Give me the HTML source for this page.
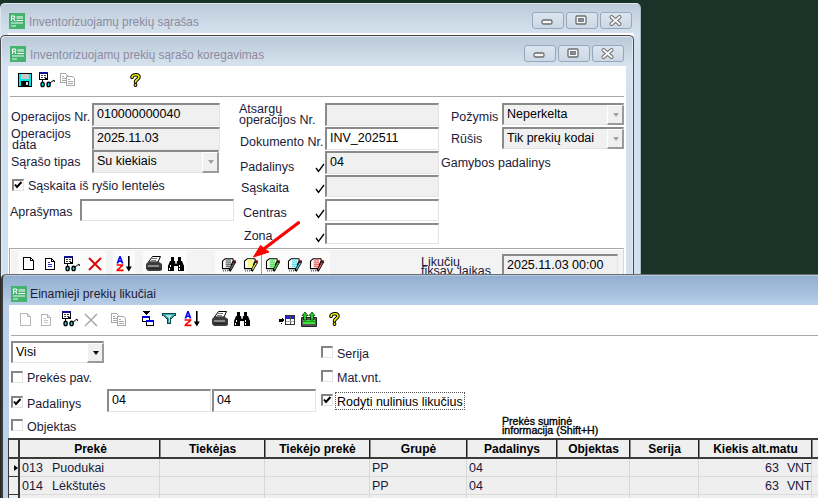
<!DOCTYPE html><html><head><meta charset="utf-8"><style>
*{box-sizing:border-box;margin:0;padding:0}
html,body{width:818px;height:498px;overflow:hidden;background:#1a3329;font-family:"Liberation Sans",sans-serif;font-size:12px;color:#000}
.a{position:absolute}
svg.a{overflow:visible}
.win{position:absolute;border-radius:6px 6px 0 0}
.ttl{position:absolute;font-size:11.8px;color:#8d8aa0;white-space:nowrap;line-height:14px;transform:scaleY(1.12);transform-origin:0 11px}
.cb{position:absolute;width:32px;height:17px;border:1px solid #98a8bc;border-radius:3px;background:linear-gradient(#dbe5ef,#cbd8e5)}
.lbl{position:absolute;white-space:nowrap;color:#1a1a3a;font-size:12.5px;line-height:14px}
.lbl2{position:absolute;white-space:nowrap;color:#1a1a3a;font-size:12.5px;line-height:9px}
.fld{position:absolute;border-top:2px solid #8a8a8a;border-left:2px solid #8a8a8a;border-right:1px solid #e4e4e4;border-bottom:1px solid #e4e4e4;background:#f0f0f0;font-size:12.5px;line-height:19px;padding-left:3px;white-space:nowrap;color:#000}
.fld.w{background:#fff}
.dd{position:absolute;top:0px;right:-1px;width:17px;bottom:-1px;background:#f0f0f0;border-left:1px solid #fff;border-top:1px solid #fff;border-right:2px solid #9a9a9a;border-bottom:2px solid #9a9a9a}
.dd:after{content:"";position:absolute;left:4.5px;top:7px;border-left:3.5px solid transparent;border-right:3.5px solid transparent;border-top:4.5px solid #a0a0a0}
.dd.k:after{border-top-color:#000}
.chk{position:absolute;width:12px;height:12px;border-top:2px solid #848484;border-left:2px solid #848484;border-right:1px solid #e2e2e2;border-bottom:1px solid #e2e2e2;background:#fff}
.sep{position:absolute;height:2px;background:#a8a8a8;border-bottom:1px solid #fff}
.hd{font-weight:bold;text-align:center;font-size:12px;line-height:14px;color:#000;white-space:nowrap}
.cell{font-size:12.5px;line-height:15px;color:#1a1a3a;white-space:nowrap}
.tk{position:absolute;width:9px;height:9px}
</style></head><body>
<div class="win" style="left:0;top:3px;width:641px;height:280px;background:linear-gradient(#bccbd9,#c9d7e4 14px,#d5e2ee 30px,#d3e1ef 60px);border:1px solid #dfe6ed;border-right-color:#a9b7c5;border-bottom:none;border-radius:5px 5px 0 0"></div>
<svg class="a" style="left:9px;top:13px" width="16" height="16" viewBox="0 0 16 16"><rect x="0" y="0" width="16" height="16" fill="#45b26f"/><path fill-rule="evenodd" d="M2 2.5 H4.6 C5.7 2.5 6.3 3.1 6.3 4.1 C6.3 4.9 5.9 5.4 5.2 5.6 L6.6 8 H5.4 L4.2 5.8 H3.1 V8 H2 Z M3.1 3.4 V4.9 H4.5 C5 4.9 5.2 4.6 5.2 4.15 C5.2 3.7 5 3.4 4.5 3.4 Z" fill="#fff"/><rect x="7.5" y="3" width="6.5" height="1" fill="#a8dcbc"/><rect x="7.5" y="4.5" width="6.5" height="1" fill="#fff"/><rect x="7.5" y="7" width="6.5" height="1" fill="#fff"/><rect x="2" y="9.5" width="12" height="1" fill="#f0faf4"/><rect x="2" y="12.5" width="5" height="1" fill="#e8f6ee"/></svg>
<div class="ttl" style="left:29px;top:15px">Inventorizuojamų prekių sąrašas</div>
<div class="cb" style="left:532px;top:12px"></div><div class="cb" style="left:566px;top:12px"></div><div class="cb" style="left:600px;top:12px"></div><svg class="a" style="left:541px;top:19px" width="13" height="7" viewBox="0 0 13 7"><rect x="1" y="1" width="10" height="4" rx="1.5" fill="#f6f6f6" stroke="#6e6e6e" stroke-width="1.3"/></svg><svg class="a" style="left:575px;top:15px" width="13" height="11" viewBox="0 0 13 11"><rect x="1" y="1" width="10" height="8" rx="1" fill="#f6f6f6" stroke="#6e6e6e" stroke-width="1.3"/><rect x="3.5" y="3.5" width="5" height="3" fill="#7a8ca2" stroke="#6e6e6e" stroke-width="0.8"/></svg><svg class="a" style="left:609px;top:15px" width="13" height="11" viewBox="0 0 13 11"><path d="M2.5 2 L10.5 9 M10.5 2 L2.5 9" stroke="#6e6e6e" stroke-width="4" stroke-linecap="round"/><path d="M2.5 2 L10.5 9 M10.5 2 L2.5 9" stroke="#f6f6f6" stroke-width="2" stroke-linecap="round"/></svg>
<div class="a" style="left:8px;top:33px;width:626px;height:3px;background:#fff"></div>
<div class="win" style="left:0;top:35px;width:634px;height:250px;background:linear-gradient(#bac9d7,#c8d6e3 15px,#d6e3ef 30px,#d2e1f0 60px);border:1px solid #4a4a4a;border-bottom:none;border-radius:5px 5px 0 0;box-shadow:inset 1px 1px 0 #e0e8f0,inset -1px 0 0 #e0e8f0"></div>
<svg class="a" style="left:10px;top:46px" width="16" height="16" viewBox="0 0 16 16"><rect x="0" y="0" width="16" height="16" fill="#45b26f"/><path fill-rule="evenodd" d="M2 2.5 H4.6 C5.7 2.5 6.3 3.1 6.3 4.1 C6.3 4.9 5.9 5.4 5.2 5.6 L6.6 8 H5.4 L4.2 5.8 H3.1 V8 H2 Z M3.1 3.4 V4.9 H4.5 C5 4.9 5.2 4.6 5.2 4.15 C5.2 3.7 5 3.4 4.5 3.4 Z" fill="#fff"/><rect x="7.5" y="3" width="6.5" height="1" fill="#a8dcbc"/><rect x="7.5" y="4.5" width="6.5" height="1" fill="#fff"/><rect x="7.5" y="7" width="6.5" height="1" fill="#fff"/><rect x="2" y="9.5" width="12" height="1" fill="#f0faf4"/><rect x="2" y="12.5" width="5" height="1" fill="#e8f6ee"/></svg>
<div class="ttl" style="left:30px;top:48px">Inventorizuojamų prekių sąrašo koregavimas</div>
<div class="cb" style="left:524px;top:45px"></div><div class="cb" style="left:558px;top:45px"></div><div class="cb" style="left:592px;top:45px"></div><svg class="a" style="left:533px;top:52px" width="13" height="7" viewBox="0 0 13 7"><rect x="1" y="1" width="10" height="4" rx="1.5" fill="#f6f6f6" stroke="#6e6e6e" stroke-width="1.3"/></svg><svg class="a" style="left:567px;top:48px" width="13" height="11" viewBox="0 0 13 11"><rect x="1" y="1" width="10" height="8" rx="1" fill="#f6f6f6" stroke="#6e6e6e" stroke-width="1.3"/><rect x="3.5" y="3.5" width="5" height="3" fill="#7a8ca2" stroke="#6e6e6e" stroke-width="0.8"/></svg><svg class="a" style="left:601px;top:48px" width="13" height="11" viewBox="0 0 13 11"><path d="M2.5 2 L10.5 9 M10.5 2 L2.5 9" stroke="#6e6e6e" stroke-width="4" stroke-linecap="round"/><path d="M2.5 2 L10.5 9 M10.5 2 L2.5 9" stroke="#f6f6f6" stroke-width="2" stroke-linecap="round"/></svg>
<div class="a" style="left:8px;top:66px;width:618px;height:210px;background:#fff"></div>
<div class="sep" style="left:10px;top:96px;width:614px"></div>
<svg class="a" style="left:18px;top:73px" width="14" height="14" viewBox="0 0 14 14" shape-rendering="crispEdges"><rect x="0" y="0" width="14" height="14" fill="#000"/><rect x="1" y="1" width="12" height="12" fill="#00e8e8"/><rect x="3" y="1" width="8" height="5" fill="#c8c8c8"/><rect x="3" y="8" width="8" height="6" fill="#000"/><rect x="8" y="9" width="2" height="3" fill="#e0e0e0"/></svg>
<svg class="a" style="left:39px;top:72px" width="9" height="8" viewBox="0 0 9 8" shape-rendering="crispEdges"><rect x="0" y="0" width="9" height="8" fill="#000"/><rect x="0" y="0" width="9" height="2" fill="#101090"/><rect x="1" y="2" width="7" height="5" fill="#fff"/><rect x="2" y="3" width="2" height="1" fill="#444"/><rect x="5" y="3" width="2" height="1" fill="#444"/><rect x="2" y="5" width="2" height="1" fill="#444"/><rect x="5" y="5" width="2" height="1" fill="#444"/><rect x="6" y="6" width="2" height="2" fill="#000"/><rect x="3" y="8" width="1" height="2" fill="#000"/></svg><svg class="a" style="left:39px;top:72px" width="17" height="16" viewBox="0 0 17 16"><ellipse cx="3.6" cy="12.4" rx="1.6" ry="2.2" fill="#00e8f8" stroke="#000" stroke-width="1.4"/><ellipse cx="9.6" cy="12.4" rx="1.6" ry="2.2" fill="#00e8f8" stroke="#000" stroke-width="1.4"/><path d="M11 11 L15 8 L15.5 10" fill="none" stroke="#000" stroke-width="1"/></svg>
<svg class="a" style="left:60px;top:73px" width="15" height="13" viewBox="0 0 15 13" shape-rendering="crispEdges"><path d="M0.5 0.5 H5.5 L7.5 2.5 V9.5 H0.5 Z" fill="#fff" stroke="#a8a8a8"/><rect x="2" y="3" width="2" height="1" fill="#a8a8a8"/><rect x="2" y="5" width="4" height="1" fill="#a8a8a8"/><rect x="2" y="7" width="4" height="1" fill="#a8a8a8"/><path d="M6.5 3.5 H12.5 L14.5 5.5 V12.5 H6.5 Z" fill="#fff" stroke="#a8a8a8"/><rect x="8" y="6" width="2" height="1" fill="#a8a8a8"/><rect x="8" y="8" width="5" height="1" fill="#a8a8a8"/><rect x="8" y="10" width="5" height="1" fill="#a8a8a8"/></svg>
<svg class="a" style="left:130px;top:73px" width="11" height="14" viewBox="0 0 11 14"><path d="M2 4.5 C2 1.5 9 0.5 9 4 C9 6.5 5.5 6.5 5.5 9" fill="none" stroke="#000" stroke-width="3.6" stroke-linecap="round"/><circle cx="5.5" cy="12" r="1.9" fill="#000"/><path d="M2 4.5 C2 1.5 9 0.5 9 4 C9 6.5 5.5 6.5 5.5 9" fill="none" stroke="#f0f000" stroke-width="1.6" stroke-linecap="round"/><circle cx="5.5" cy="12" r="0.9" fill="#f0f000"/></svg>
<div class="lbl" style="left:11px;top:110px">Operacijos Nr.</div>
<div class="lbl2" style="left:11px;top:130px">Operacijos</div>
<div class="lbl2" style="left:12px;top:141px">data</div>
<div class="lbl" style="left:11px;top:155px">Sąrašo tipas</div>
<div class="fld" style="left:92px;top:103px;width:128px;height:23px">010000000040</div>
<div class="fld" style="left:92px;top:127px;width:128px;height:23px">2025.11.03</div>
<div class="fld" style="left:92px;top:150px;width:127px;height:23px">Su kiekiais<div class="dd"></div></div>
<div class="chk" style="left:12px;top:179px"></div><svg class="a" style="left:12px;top:179px" width="12" height="12" viewBox="0 0 12 12"><path d="M3 5.5 L5 8 L9.5 3" fill="none" stroke="#000" stroke-width="2"/></svg>
<div class="lbl" style="left:28px;top:179px">Sąskaita iš ryšio lentelės</div>
<div class="lbl" style="left:10px;top:205px">Aprašymas</div>
<div class="fld w" style="left:80px;top:199px;width:154px;height:22px"></div>
<div class="lbl2" style="left:239px;top:105px">Atsargų</div>
<div class="lbl2" style="left:239px;top:116px">operacijos Nr.</div>
<div class="lbl" style="left:240px;top:135px">Dokumento Nr.</div>
<div class="lbl" style="left:240px;top:160px">Padalinys</div>
<div class="lbl" style="left:241px;top:181px">Sąskaita</div>
<div class="lbl" style="left:243px;top:206px">Centras</div>
<div class="lbl" style="left:244px;top:229px">Zona</div>
<div class="fld" style="left:325px;top:103px;width:114px;height:23px"></div>
<div class="fld w" style="left:325px;top:127px;width:114px;height:23px">INV_202511</div>
<div class="fld" style="left:325px;top:151px;width:114px;height:23px">04</div>
<div class="fld" style="left:325px;top:175px;width:114px;height:22px"></div>
<div class="fld w" style="left:325px;top:199px;width:114px;height:22px"></div>
<div class="fld w" style="left:325px;top:223px;width:114px;height:21px"></div>
<svg class="a" style="left:315px;top:163px" width="10" height="10" viewBox="0 0 10 10"><path d="M1 5 L3.5 8.5 L9 1" fill="none" stroke="#000" stroke-width="1.3"/></svg>
<svg class="a" style="left:315px;top:184px" width="10" height="10" viewBox="0 0 10 10"><path d="M1 5 L3.5 8.5 L9 1" fill="none" stroke="#000" stroke-width="1.3"/></svg>
<svg class="a" style="left:315px;top:209px" width="10" height="10" viewBox="0 0 10 10"><path d="M1 5 L3.5 8.5 L9 1" fill="none" stroke="#000" stroke-width="1.3"/></svg>
<svg class="a" style="left:315px;top:233px" width="10" height="10" viewBox="0 0 10 10"><path d="M1 5 L3.5 8.5 L9 1" fill="none" stroke="#000" stroke-width="1.3"/></svg>
<div class="lbl" style="left:451px;top:110px">Požymis</div>
<div class="lbl" style="left:451px;top:132px">Rūšis</div>
<div class="fld" style="left:502px;top:103px;width:122px;height:22px">Neperkelta<div class="dd"></div></div>
<div class="fld" style="left:502px;top:127px;width:122px;height:22px">Tik prekių kodai<div class="dd"></div></div>
<div class="lbl" style="left:441px;top:156px">Gamybos padalinys</div>
<div class="a" style="left:9px;top:248px;width:615px;height:30px;background:#f3f3f3;border-top:1px solid #a8a8a8;border-left:1px solid #a8a8a8;border-right:1px solid #d8d8d8;box-shadow:inset 1px 1px 0 #fff"></div>
<div class="a" style="left:18px;top:251px;width:88px;height:24px;background:#fbfbfb"></div>
<div class="a" style="left:113px;top:251px;width:22px;height:24px;background:#fbfbfb"></div>
<div class="a" style="left:143px;top:251px;width:44px;height:24px;background:#fbfbfb"></div>
<div class="a" style="left:215px;top:251px;width:115px;height:24px;background:#fbfbfb"></div>
<div class="a" style="left:261px;top:251px;width:1px;height:24px;background:#a0a0a0"></div>
<svg class="a" style="left:23px;top:257px" width="11" height="13" viewBox="0 0 11 13" shape-rendering="crispEdges"><path d="M0.5 0.5 H7.5 L10.5 3.5 V12.5 H0.5 Z" fill="#fff" stroke="#000"/><path d="M7.5 0.5 V3.5 H10.5" fill="none" stroke="#000"/></svg>
<svg class="a" style="left:45px;top:258px" width="10" height="12" viewBox="0 0 10 12" shape-rendering="crispEdges"><path d="M0.5 0.5 H6.5 L9.5 3.5 V11.5 H0.5 Z" fill="#fff" stroke="#000"/><path d="M6.5 0.5 V3.5 H9.5" fill="none" stroke="#000"/><rect x="3" y="4" width="2" height="1" fill="#3030c0"/><rect x="3" y="6" width="4" height="1" fill="#3030c0"/><rect x="3" y="8" width="4" height="1" fill="#3030c0"/></svg>
<svg class="a" style="left:64px;top:256px" width="9" height="8" viewBox="0 0 9 8" shape-rendering="crispEdges"><rect x="0" y="0" width="9" height="8" fill="#000"/><rect x="0" y="0" width="9" height="2" fill="#101090"/><rect x="1" y="2" width="7" height="5" fill="#fff"/><rect x="2" y="3" width="2" height="1" fill="#444"/><rect x="5" y="3" width="2" height="1" fill="#444"/><rect x="2" y="5" width="2" height="1" fill="#444"/><rect x="5" y="5" width="2" height="1" fill="#444"/><rect x="6" y="6" width="2" height="2" fill="#000"/><rect x="3" y="8" width="1" height="2" fill="#000"/></svg><svg class="a" style="left:64px;top:256px" width="17" height="16" viewBox="0 0 17 16"><ellipse cx="3.6" cy="12.4" rx="1.6" ry="2.2" fill="#00e8f8" stroke="#000" stroke-width="1.4"/><ellipse cx="9.6" cy="12.4" rx="1.6" ry="2.2" fill="#00e8f8" stroke="#000" stroke-width="1.4"/><path d="M11 11 L15 8 L15.5 10" fill="none" stroke="#000" stroke-width="1"/></svg>
<svg class="a" style="left:88px;top:257px" width="14" height="14" viewBox="0 0 14 14"><path d="M1 1 L13 13 M13 1 L1 13" stroke="#e00000" stroke-width="1.8" fill="none"/></svg>
<svg class="a" style="left:116px;top:256px" width="16" height="16" viewBox="0 0 16 16"><path fill-rule="evenodd" d="M0.5 7.5 L3.3 0 H4.7 L7.5 7.5 H5.6 L5.1 6 H2.9 L2.4 7.5 Z M3.3 4.6 H4.7 L4 2.4 Z" fill="#0000ff"/><path d="M0.5 8.2 H7.3 V9.7 L3 13.6 H7.5 V15.2 H0.5 V13.7 L4.8 9.8 H0.5 Z" fill="#ff0000"/><rect x="12" y="0" width="1.6" height="11" fill="#000"/><path d="M9.8 10.5 H15.8 L12.8 15.6 Z" fill="#000"/></svg>
<svg class="a" style="left:146px;top:256px" width="16" height="15" viewBox="0 0 16 15"><path d="M6.5 0.5 L14.5 0.5 L12 6 L2.5 6 Z" fill="#fff" stroke="#000"/><rect x="6" y="2" width="5" height="1" fill="#777"/><rect x="5" y="4" width="5" height="1" fill="#777"/><path d="M2 6 H13 L16 8 V14 L14 15 H2 L0 13 V8 Z" fill="#3c3c3c"/><rect x="2" y="9" width="11" height="2" fill="#8a8a8a"/><rect x="2" y="12" width="12" height="1" fill="#202020"/></svg>
<svg class="a" style="left:168px;top:257px" width="16" height="14" viewBox="0 0 16 14"><rect x="3" y="0" width="3" height="4" fill="#000"/><rect x="10" y="0" width="3" height="4" fill="#000"/><path d="M2 4 H7 L7.5 7 H8.5 L9 4 H14 L16 9 V14 H10 V9 H6 V14 H0 V9 Z" fill="#000"/><rect x="2" y="8" width="1" height="2" fill="#fff"/><rect x="11" y="8" width="1" height="2" fill="#fff"/><rect x="1" y="11" width="1" height="2" fill="#fff"/><rect x="11" y="11" width="1" height="2" fill="#fff"/></svg>
<svg class="a" style="left:222px;top:258px" width="15" height="14" viewBox="0 0 15 14"><path d="M3.3 0.7 H10.9 L11.3 2.6 L7.6 10.6 H0.5 V3.2 Z" fill="#fff" stroke="#000" stroke-width="1.1" stroke-linejoin="round"/><rect x="3.7" y="1.4" width="5.3" height="1.4" fill="#707070"/><rect x="3.7" y="2.8" width="5.3" height="0.7" fill="#c0c0c0"/><rect x="3.7" y="3.5" width="5.3" height="1.4" fill="#707070"/><rect x="3.7" y="4.9" width="5.3" height="0.7" fill="#c0c0c0"/><rect x="3.7" y="5.6" width="5.3" height="1.4" fill="#707070"/><rect x="3.7" y="7.0" width="5.3" height="0.7" fill="#c0c0c0"/><rect x="3.7" y="7.700000000000001" width="5.3" height="1.4" fill="#707070"/><rect x="3.7" y="9.100000000000001" width="5.3" height="0.7" fill="#c0c0c0"/><rect x="1" y="12" width="1" height="1.6" fill="#777"/><rect x="3" y="12" width="1" height="1.6" fill="#777"/><rect x="5" y="12" width="1" height="1.6" fill="#777"/><path d="M12.9 3.6 L7.5 13.2" stroke="#000" stroke-width="2.6"/><path d="M12.5 4.3 L8.4 11.5" stroke="#707070" stroke-width="1.1"/><rect x="11.3" y="2.3" width="2.5" height="2.4" fill="#6a0000"/></svg>
<svg class="a" style="left:244px;top:258px" width="15" height="14" viewBox="0 0 15 14"><path d="M3.3 0.7 H10.9 L11.3 2.6 L7.6 10.6 H0.5 V3.2 Z" fill="#fff" stroke="#000" stroke-width="1.1" stroke-linejoin="round"/><rect x="3.7" y="1.4" width="5.3" height="1.4" fill="#f8f860"/><rect x="3.7" y="2.8" width="5.3" height="0.7" fill="#ffffc0"/><rect x="3.7" y="3.5" width="5.3" height="1.4" fill="#f8f860"/><rect x="3.7" y="4.9" width="5.3" height="0.7" fill="#ffffc0"/><rect x="3.7" y="5.6" width="5.3" height="1.4" fill="#f8f860"/><rect x="3.7" y="7.0" width="5.3" height="0.7" fill="#ffffc0"/><rect x="3.7" y="7.700000000000001" width="5.3" height="1.4" fill="#f8f860"/><rect x="3.7" y="9.100000000000001" width="5.3" height="0.7" fill="#ffffc0"/><rect x="1" y="12" width="1" height="1.6" fill="#777"/><rect x="3" y="12" width="1" height="1.6" fill="#777"/><rect x="5" y="12" width="1" height="1.6" fill="#777"/><path d="M12.9 3.6 L7.5 13.2" stroke="#000" stroke-width="2.6"/><path d="M12.5 4.3 L8.4 11.5" stroke="#f8f860" stroke-width="1.1"/><rect x="11.3" y="2.3" width="2.5" height="2.4" fill="#6a0000"/></svg>
<svg class="a" style="left:266px;top:258px" width="15" height="14" viewBox="0 0 15 14"><path d="M3.3 0.7 H10.9 L11.3 2.6 L7.6 10.6 H0.5 V3.2 Z" fill="#fff" stroke="#000" stroke-width="1.1" stroke-linejoin="round"/><rect x="3.7" y="1.4" width="5.3" height="1.4" fill="#50e050"/><rect x="3.7" y="2.8" width="5.3" height="0.7" fill="#b0f0b0"/><rect x="3.7" y="3.5" width="5.3" height="1.4" fill="#50e050"/><rect x="3.7" y="4.9" width="5.3" height="0.7" fill="#b0f0b0"/><rect x="3.7" y="5.6" width="5.3" height="1.4" fill="#50e050"/><rect x="3.7" y="7.0" width="5.3" height="0.7" fill="#b0f0b0"/><rect x="3.7" y="7.700000000000001" width="5.3" height="1.4" fill="#50e050"/><rect x="3.7" y="9.100000000000001" width="5.3" height="0.7" fill="#b0f0b0"/><rect x="1" y="12" width="1" height="1.6" fill="#777"/><rect x="3" y="12" width="1" height="1.6" fill="#777"/><rect x="5" y="12" width="1" height="1.6" fill="#777"/><path d="M12.9 3.6 L7.5 13.2" stroke="#000" stroke-width="2.6"/><path d="M12.5 4.3 L8.4 11.5" stroke="#50e050" stroke-width="1.1"/><rect x="11.3" y="2.3" width="2.5" height="2.4" fill="#6a0000"/></svg>
<svg class="a" style="left:288px;top:258px" width="15" height="14" viewBox="0 0 15 14"><path d="M3.3 0.7 H10.9 L11.3 2.6 L7.6 10.6 H0.5 V3.2 Z" fill="#fff" stroke="#000" stroke-width="1.1" stroke-linejoin="round"/><rect x="3.7" y="1.4" width="5.3" height="1.4" fill="#60e0f0"/><rect x="3.7" y="2.8" width="5.3" height="0.7" fill="#c0f4fa"/><rect x="3.7" y="3.5" width="5.3" height="1.4" fill="#60e0f0"/><rect x="3.7" y="4.9" width="5.3" height="0.7" fill="#c0f4fa"/><rect x="3.7" y="5.6" width="5.3" height="1.4" fill="#60e0f0"/><rect x="3.7" y="7.0" width="5.3" height="0.7" fill="#c0f4fa"/><rect x="3.7" y="7.700000000000001" width="5.3" height="1.4" fill="#60e0f0"/><rect x="3.7" y="9.100000000000001" width="5.3" height="0.7" fill="#c0f4fa"/><rect x="1" y="12" width="1" height="1.6" fill="#777"/><rect x="3" y="12" width="1" height="1.6" fill="#777"/><rect x="5" y="12" width="1" height="1.6" fill="#777"/><path d="M12.9 3.6 L7.5 13.2" stroke="#000" stroke-width="2.6"/><path d="M12.5 4.3 L8.4 11.5" stroke="#60e0f0" stroke-width="1.1"/><rect x="11.3" y="2.3" width="2.5" height="2.4" fill="#6a0000"/></svg>
<svg class="a" style="left:310px;top:258px" width="15" height="14" viewBox="0 0 15 14"><path d="M3.3 0.7 H10.9 L11.3 2.6 L7.6 10.6 H0.5 V3.2 Z" fill="#fff" stroke="#000" stroke-width="1.1" stroke-linejoin="round"/><rect x="3.7" y="1.4" width="5.3" height="1.4" fill="#f06a6a"/><rect x="3.7" y="2.8" width="5.3" height="0.7" fill="#fac0c0"/><rect x="3.7" y="3.5" width="5.3" height="1.4" fill="#f06a6a"/><rect x="3.7" y="4.9" width="5.3" height="0.7" fill="#fac0c0"/><rect x="3.7" y="5.6" width="5.3" height="1.4" fill="#f06a6a"/><rect x="3.7" y="7.0" width="5.3" height="0.7" fill="#fac0c0"/><rect x="3.7" y="7.700000000000001" width="5.3" height="1.4" fill="#f06a6a"/><rect x="3.7" y="9.100000000000001" width="5.3" height="0.7" fill="#fac0c0"/><rect x="1" y="12" width="1" height="1.6" fill="#777"/><rect x="3" y="12" width="1" height="1.6" fill="#777"/><rect x="5" y="12" width="1" height="1.6" fill="#777"/><path d="M12.9 3.6 L7.5 13.2" stroke="#000" stroke-width="2.6"/><path d="M12.5 4.3 L8.4 11.5" stroke="#f06a6a" stroke-width="1.1"/><rect x="11.3" y="2.3" width="2.5" height="2.4" fill="#6a0000"/></svg>
<div class="lbl2" style="left:421px;top:258px">Likučių</div>
<div class="lbl2" style="left:421px;top:267px">fiksav. laikas</div>
<div class="fld" style="left:502px;top:254px;width:116px;height:23px">2025.11.03 00:00</div>
<svg class="a" style="left:240px;top:215px" width="70" height="50" viewBox="0 0 70 50"><path d="M58.5 7.8 L25 33" stroke="#ff0000" stroke-width="3.2" stroke-linecap="round"/><path d="M13.5 42 L20.5 30.5 L29 37 Z" fill="#ff0000" stroke="#ff0000" stroke-width="1" stroke-linejoin="round"/></svg>
<div class="win" style="left:1px;top:274px;width:830px;height:230px;background:linear-gradient(#92aecf,#a6c0dd 18px,#b9d0e8 31px,#bcd3ea);border-top:1px solid #6e6e6e;border-left:2px solid #3a3a3a;border-radius:5px 0 0 0;box-shadow:inset 0 1px 0 #b4c8de"></div>
<div class="a" style="left:0;top:276px;width:1px;height:230px;background:#2a2a2a"></div>
<svg class="a" style="left:11px;top:286px" width="16" height="16" viewBox="0 0 16 16"><rect x="0" y="0" width="16" height="16" fill="#45b26f"/><path fill-rule="evenodd" d="M2 2.5 H4.6 C5.7 2.5 6.3 3.1 6.3 4.1 C6.3 4.9 5.9 5.4 5.2 5.6 L6.6 8 H5.4 L4.2 5.8 H3.1 V8 H2 Z M3.1 3.4 V4.9 H4.5 C5 4.9 5.2 4.6 5.2 4.15 C5.2 3.7 5 3.4 4.5 3.4 Z" fill="#fff"/><rect x="7.5" y="3" width="6.5" height="1" fill="#a8dcbc"/><rect x="7.5" y="4.5" width="6.5" height="1" fill="#fff"/><rect x="7.5" y="7" width="6.5" height="1" fill="#fff"/><rect x="2" y="9.5" width="12" height="1" fill="#f0faf4"/><rect x="2" y="12.5" width="5" height="1" fill="#e8f6ee"/></svg>
<div class="ttl" style="left:30px;top:287px;color:#1c1a36;font-size:12.2px">Einamieji prekių likučiai</div>
<div class="a" style="left:9px;top:305px;width:820px;height:200px;background:#fff"></div>
<div class="sep" style="left:11px;top:335px;width:810px"></div>
<svg class="a" style="left:20px;top:313px" width="11" height="13" viewBox="0 0 11 13" shape-rendering="crispEdges"><path d="M0.5 0.5 H7.5 L10.5 3.5 V12.5 H0.5 Z" fill="#fff" stroke="#b8b8b8"/><path d="M7.5 0.5 V3.5 H10.5" fill="none" stroke="#b8b8b8"/></svg>
<svg class="a" style="left:41px;top:314px" width="10" height="12" viewBox="0 0 10 12" shape-rendering="crispEdges"><path d="M0.5 0.5 H6.5 L9.5 3.5 V11.5 H0.5 Z" fill="#fff" stroke="#b8b8b8"/><path d="M6.5 0.5 V3.5 H9.5" fill="none" stroke="#b8b8b8"/><rect x="3" y="4" width="2" height="1" fill="#c8c8c8"/><rect x="3" y="6" width="4" height="1" fill="#c8c8c8"/><rect x="3" y="8" width="4" height="1" fill="#c8c8c8"/></svg>
<svg class="a" style="left:62px;top:311px" width="9" height="8" viewBox="0 0 9 8" shape-rendering="crispEdges"><rect x="0" y="0" width="9" height="8" fill="#000"/><rect x="0" y="0" width="9" height="2" fill="#101090"/><rect x="1" y="2" width="7" height="5" fill="#fff"/><rect x="2" y="3" width="2" height="1" fill="#444"/><rect x="5" y="3" width="2" height="1" fill="#444"/><rect x="2" y="5" width="2" height="1" fill="#444"/><rect x="5" y="5" width="2" height="1" fill="#444"/><rect x="6" y="6" width="2" height="2" fill="#000"/><rect x="3" y="8" width="1" height="2" fill="#000"/></svg><svg class="a" style="left:62px;top:311px" width="17" height="16" viewBox="0 0 17 16"><ellipse cx="3.6" cy="12.4" rx="1.6" ry="2.2" fill="#00e8f8" stroke="#000" stroke-width="1.4"/><ellipse cx="9.6" cy="12.4" rx="1.6" ry="2.2" fill="#00e8f8" stroke="#000" stroke-width="1.4"/><path d="M11 11 L15 8 L15.5 10" fill="none" stroke="#000" stroke-width="1"/></svg>
<svg class="a" style="left:84px;top:313px" width="14" height="14" viewBox="0 0 14 14"><path d="M1 1 L13 13 M13 1 L1 13" stroke="#a8a8a8" stroke-width="1.5" fill="none"/></svg>
<svg class="a" style="left:111px;top:313px" width="15" height="13" viewBox="0 0 15 13" shape-rendering="crispEdges"><path d="M0.5 0.5 H5.5 L7.5 2.5 V9.5 H0.5 Z" fill="#fff" stroke="#a8a8a8"/><rect x="2" y="3" width="2" height="1" fill="#a8a8a8"/><rect x="2" y="5" width="4" height="1" fill="#a8a8a8"/><rect x="2" y="7" width="4" height="1" fill="#a8a8a8"/><path d="M6.5 3.5 H12.5 L14.5 5.5 V12.5 H6.5 Z" fill="#fff" stroke="#a8a8a8"/><rect x="8" y="6" width="2" height="1" fill="#a8a8a8"/><rect x="8" y="8" width="5" height="1" fill="#a8a8a8"/><rect x="8" y="10" width="5" height="1" fill="#a8a8a8"/></svg>
<svg class="a" style="left:142px;top:311px" width="12" height="15" viewBox="0 0 12 15" shape-rendering="crispEdges"><path d="M0 0 H9 L4.5 4 Z" fill="#000"/><rect x="0.5" y="5.5" width="7" height="5" fill="#fff" stroke="#000"/><rect x="0" y="5" width="8" height="2" fill="#0000e0"/><rect x="4.5" y="9.5" width="7" height="5" fill="#fff" stroke="#000"/><rect x="4" y="9" width="8" height="2" fill="#0000e0"/></svg>
<svg class="a" style="left:162px;top:313px" width="14" height="11" viewBox="0 0 14 11" shape-rendering="crispEdges"><path d="M0.5 0.5 H13.5 V2 L8.5 6 V10.5 H5.5 V6 L0.5 2 Z" fill="#3aa8a8" stroke="#0a4a4a"/><path d="M3 2 H11 L7.5 5 V9 H6.5 V5 Z" fill="#b8e0e0"/></svg>
<svg class="a" style="left:184px;top:311px" width="16" height="16" viewBox="0 0 16 16"><path fill-rule="evenodd" d="M0.5 7.5 L3.3 0 H4.7 L7.5 7.5 H5.6 L5.1 6 H2.9 L2.4 7.5 Z M3.3 4.6 H4.7 L4 2.4 Z" fill="#0000ff"/><path d="M0.5 8.2 H7.3 V9.7 L3 13.6 H7.5 V15.2 H0.5 V13.7 L4.8 9.8 H0.5 Z" fill="#ff0000"/><rect x="12" y="0" width="1.6" height="11" fill="#000"/><path d="M9.8 10.5 H15.8 L12.8 15.6 Z" fill="#000"/></svg>
<svg class="a" style="left:212px;top:311px" width="16" height="15" viewBox="0 0 16 15"><path d="M6.5 0.5 L14.5 0.5 L12 6 L2.5 6 Z" fill="#fff" stroke="#000"/><rect x="6" y="2" width="5" height="1" fill="#777"/><rect x="5" y="4" width="5" height="1" fill="#777"/><path d="M2 6 H13 L16 8 V14 L14 15 H2 L0 13 V8 Z" fill="#3c3c3c"/><rect x="2" y="9" width="11" height="2" fill="#8a8a8a"/><rect x="2" y="12" width="12" height="1" fill="#202020"/></svg>
<svg class="a" style="left:234px;top:312px" width="16" height="14" viewBox="0 0 16 14"><rect x="3" y="0" width="3" height="4" fill="#000"/><rect x="10" y="0" width="3" height="4" fill="#000"/><path d="M2 4 H7 L7.5 7 H8.5 L9 4 H14 L16 9 V14 H10 V9 H6 V14 H0 V9 Z" fill="#000"/><rect x="2" y="8" width="1" height="2" fill="#fff"/><rect x="11" y="8" width="1" height="2" fill="#fff"/><rect x="1" y="11" width="1" height="2" fill="#fff"/><rect x="11" y="11" width="1" height="2" fill="#fff"/></svg>
<svg class="a" style="left:278px;top:315px" width="17" height="10" viewBox="0 0 17 10" shape-rendering="crispEdges"><path d="M6.5 5 L3.5 1.5 V3.5 H0.5 V6.5 H3.5 V8.5 Z" fill="#000"/><rect x="7.5" y="0.5" width="9" height="9" fill="#fff" stroke="#333"/><rect x="8" y="1" width="8" height="3" fill="#2020e0"/><rect x="12" y="1" width="1" height="8" fill="#555"/><rect x="8" y="6" width="8" height="1" fill="#aaa"/></svg>
<svg class="a" style="left:301px;top:312px" width="16" height="15" viewBox="0 0 16 15"><path d="M0.5 5.5 H15.5 V14.5 H0.5 Z" fill="#555" stroke="#222"/><rect x="2" y="8" width="12" height="4" fill="#40e040"/><rect x="2" y="9" width="12" height="1" fill="#10a010"/><path d="M4 0 L7 3.5 H5.5 V8 H2.5 V3.5 H1 Z" fill="#20d020" stroke="#000" stroke-width="0.6"/><path d="M11 0 L14 3.5 H12.5 V8 H9.5 V3.5 H8 Z" fill="#20d020" stroke="#000" stroke-width="0.6"/></svg>
<svg class="a" style="left:329px;top:312px" width="11" height="14" viewBox="0 0 11 14"><path d="M2 4.5 C2 1.5 9 0.5 9 4 C9 6.5 5.5 6.5 5.5 9" fill="none" stroke="#000" stroke-width="3.6" stroke-linecap="round"/><circle cx="5.5" cy="12" r="1.9" fill="#000"/><path d="M2 4.5 C2 1.5 9 0.5 9 4 C9 6.5 5.5 6.5 5.5 9" fill="none" stroke="#f0f000" stroke-width="1.6" stroke-linecap="round"/><circle cx="5.5" cy="12" r="0.9" fill="#f0f000"/></svg>
<div class="fld w" style="left:11px;top:341px;width:93px;height:22px">Visi<div class="dd k"></div></div>
<div class="chk" style="left:11px;top:371px"></div>
<div class="lbl" style="left:27px;top:371px">Prekės pav.</div>
<div class="chk" style="left:11px;top:396px"></div><svg class="a" style="left:11px;top:396px" width="12" height="12" viewBox="0 0 12 12"><path d="M3 5.5 L5 8 L9.5 3" fill="none" stroke="#000" stroke-width="2"/></svg>
<div class="lbl" style="left:27px;top:397px">Padalinys</div>
<div class="chk" style="left:11px;top:419px"></div>
<div class="lbl" style="left:27px;top:420px">Objektas</div>
<div class="fld w" style="left:107px;top:389px;width:104px;height:23px">04</div>
<div class="fld w" style="left:212px;top:389px;width:104px;height:23px">04</div>
<div class="chk" style="left:321px;top:346px"></div>
<div class="lbl" style="left:337px;top:347px">Serija</div>
<div class="chk" style="left:321px;top:370px"></div>
<div class="lbl" style="left:337px;top:371px">Mat.vnt.</div>
<div class="chk" style="left:321px;top:394px"></div><svg class="a" style="left:321px;top:394px" width="12" height="12" viewBox="0 0 12 12"><path d="M3 5.5 L5 8 L9.5 3" fill="none" stroke="#000" stroke-width="2"/></svg>
<div class="a" style="left:335px;top:392px;width:130px;height:18px;border:1px dotted #555"></div>
<div class="lbl" style="left:337px;top:395px;color:#000">Rodyti nulinius likučius</div>
<div class="a" style="left:502px;top:417px;font-size:10.6px;line-height:9px;color:#000;white-space:nowrap;-webkit-text-stroke:0.35px #000">Prekės suminė<br>informacija (Shift+H)</div>
<div class="a" style="left:9px;top:438px;width:812px;height:62px;background:#efefef"></div>
<div class="a" style="left:8px;top:438px;width:812px;height:2px;background:#3a3a3a"></div>
<div class="a" style="left:8px;top:438px;width:1px;height:62px;background:#3a3a3a"></div>
<div class="a" style="left:18px;top:438px;width:2px;height:62px;background:#3a3a3a"></div>
<div class="a" style="left:8px;top:457px;width:812px;height:2px;background:#3a3a3a"></div>
<div class="a" style="left:20px;top:476px;width:800px;height:1px;background:#dadada"></div>
<div class="a" style="left:8px;top:476px;width:11px;height:1px;background:#3a3a3a"></div>
<div class="a" style="left:20px;top:494px;width:800px;height:1px;background:#dadada"></div>
<div class="a" style="left:8px;top:494px;width:11px;height:1px;background:#3a3a3a"></div>
<div class="a" style="left:159px;top:440px;width:1px;height:17px;background:#202020"></div><div class="a" style="left:160px;top:440px;width:1px;height:17px;background:#8a8a8a"></div>
<div class="a" style="left:159px;top:459px;width:1px;height:40px;background:#d8d8d8"></div>
<div class="a" style="left:264px;top:440px;width:1px;height:17px;background:#202020"></div><div class="a" style="left:265px;top:440px;width:1px;height:17px;background:#8a8a8a"></div>
<div class="a" style="left:264px;top:459px;width:1px;height:40px;background:#d8d8d8"></div>
<div class="a" style="left:369px;top:440px;width:1px;height:17px;background:#202020"></div><div class="a" style="left:370px;top:440px;width:1px;height:17px;background:#8a8a8a"></div>
<div class="a" style="left:369px;top:459px;width:1px;height:40px;background:#d8d8d8"></div>
<div class="a" style="left:466px;top:440px;width:1px;height:17px;background:#202020"></div><div class="a" style="left:467px;top:440px;width:1px;height:17px;background:#8a8a8a"></div>
<div class="a" style="left:466px;top:459px;width:1px;height:40px;background:#d8d8d8"></div>
<div class="a" style="left:556px;top:440px;width:1px;height:17px;background:#202020"></div><div class="a" style="left:557px;top:440px;width:1px;height:17px;background:#8a8a8a"></div>
<div class="a" style="left:556px;top:459px;width:1px;height:40px;background:#d8d8d8"></div>
<div class="a" style="left:629px;top:440px;width:1px;height:17px;background:#202020"></div><div class="a" style="left:630px;top:440px;width:1px;height:17px;background:#8a8a8a"></div>
<div class="a" style="left:629px;top:459px;width:1px;height:40px;background:#d8d8d8"></div>
<div class="a" style="left:698px;top:440px;width:1px;height:17px;background:#202020"></div><div class="a" style="left:699px;top:440px;width:1px;height:17px;background:#8a8a8a"></div>
<div class="a" style="left:698px;top:459px;width:1px;height:40px;background:#d8d8d8"></div>
<div class="a" style="left:811px;top:440px;width:1px;height:17px;background:#202020"></div><div class="a" style="left:812px;top:440px;width:1px;height:17px;background:#8a8a8a"></div>
<div class="a" style="left:811px;top:459px;width:1px;height:40px;background:#d8d8d8"></div>
<div class="a hd" style="left:22px;top:442px;width:137px">Prekė</div>
<div class="a hd" style="left:161px;top:442px;width:103px">Tiekėjas</div>
<div class="a hd" style="left:266px;top:442px;width:103px">Tiekėjo prekė</div>
<div class="a hd" style="left:371px;top:442px;width:95px">Grupė</div>
<div class="a hd" style="left:468px;top:442px;width:88px">Padalinys</div>
<div class="a hd" style="left:558px;top:442px;width:71px">Objektas</div>
<div class="a hd" style="left:631px;top:442px;width:67px">Serija</div>
<div class="a hd" style="left:700px;top:442px;width:111px">Kiekis alt.matu</div>
<div class="a" style="left:14px;top:465px;border-top:3.5px solid transparent;border-bottom:3.5px solid transparent;border-left:4.5px solid #000"></div>
<div class="a cell" style="left:22px;top:461px">013</div><div class="a cell" style="left:52px;top:461px">Puodukai</div>
<div class="a cell" style="left:22px;top:479px">014</div><div class="a cell" style="left:52px;top:479px">Lėkštutės</div>
<div class="a cell" style="left:372px;top:461px">PP</div>
<div class="a cell" style="left:372px;top:479px">PP</div>
<div class="a cell" style="left:469px;top:461px">04</div>
<div class="a cell" style="left:469px;top:479px">04</div>
<div class="a cell" style="left:700px;top:461px;width:79px;text-align:right">63</div><div class="a cell" style="left:700px;top:461px;width:111px;text-align:right;letter-spacing:-0.3px">VNT</div>
<div class="a cell" style="left:700px;top:479px;width:79px;text-align:right">63</div><div class="a cell" style="left:700px;top:479px;width:111px;text-align:right;letter-spacing:-0.3px">VNT</div>
</body></html>
